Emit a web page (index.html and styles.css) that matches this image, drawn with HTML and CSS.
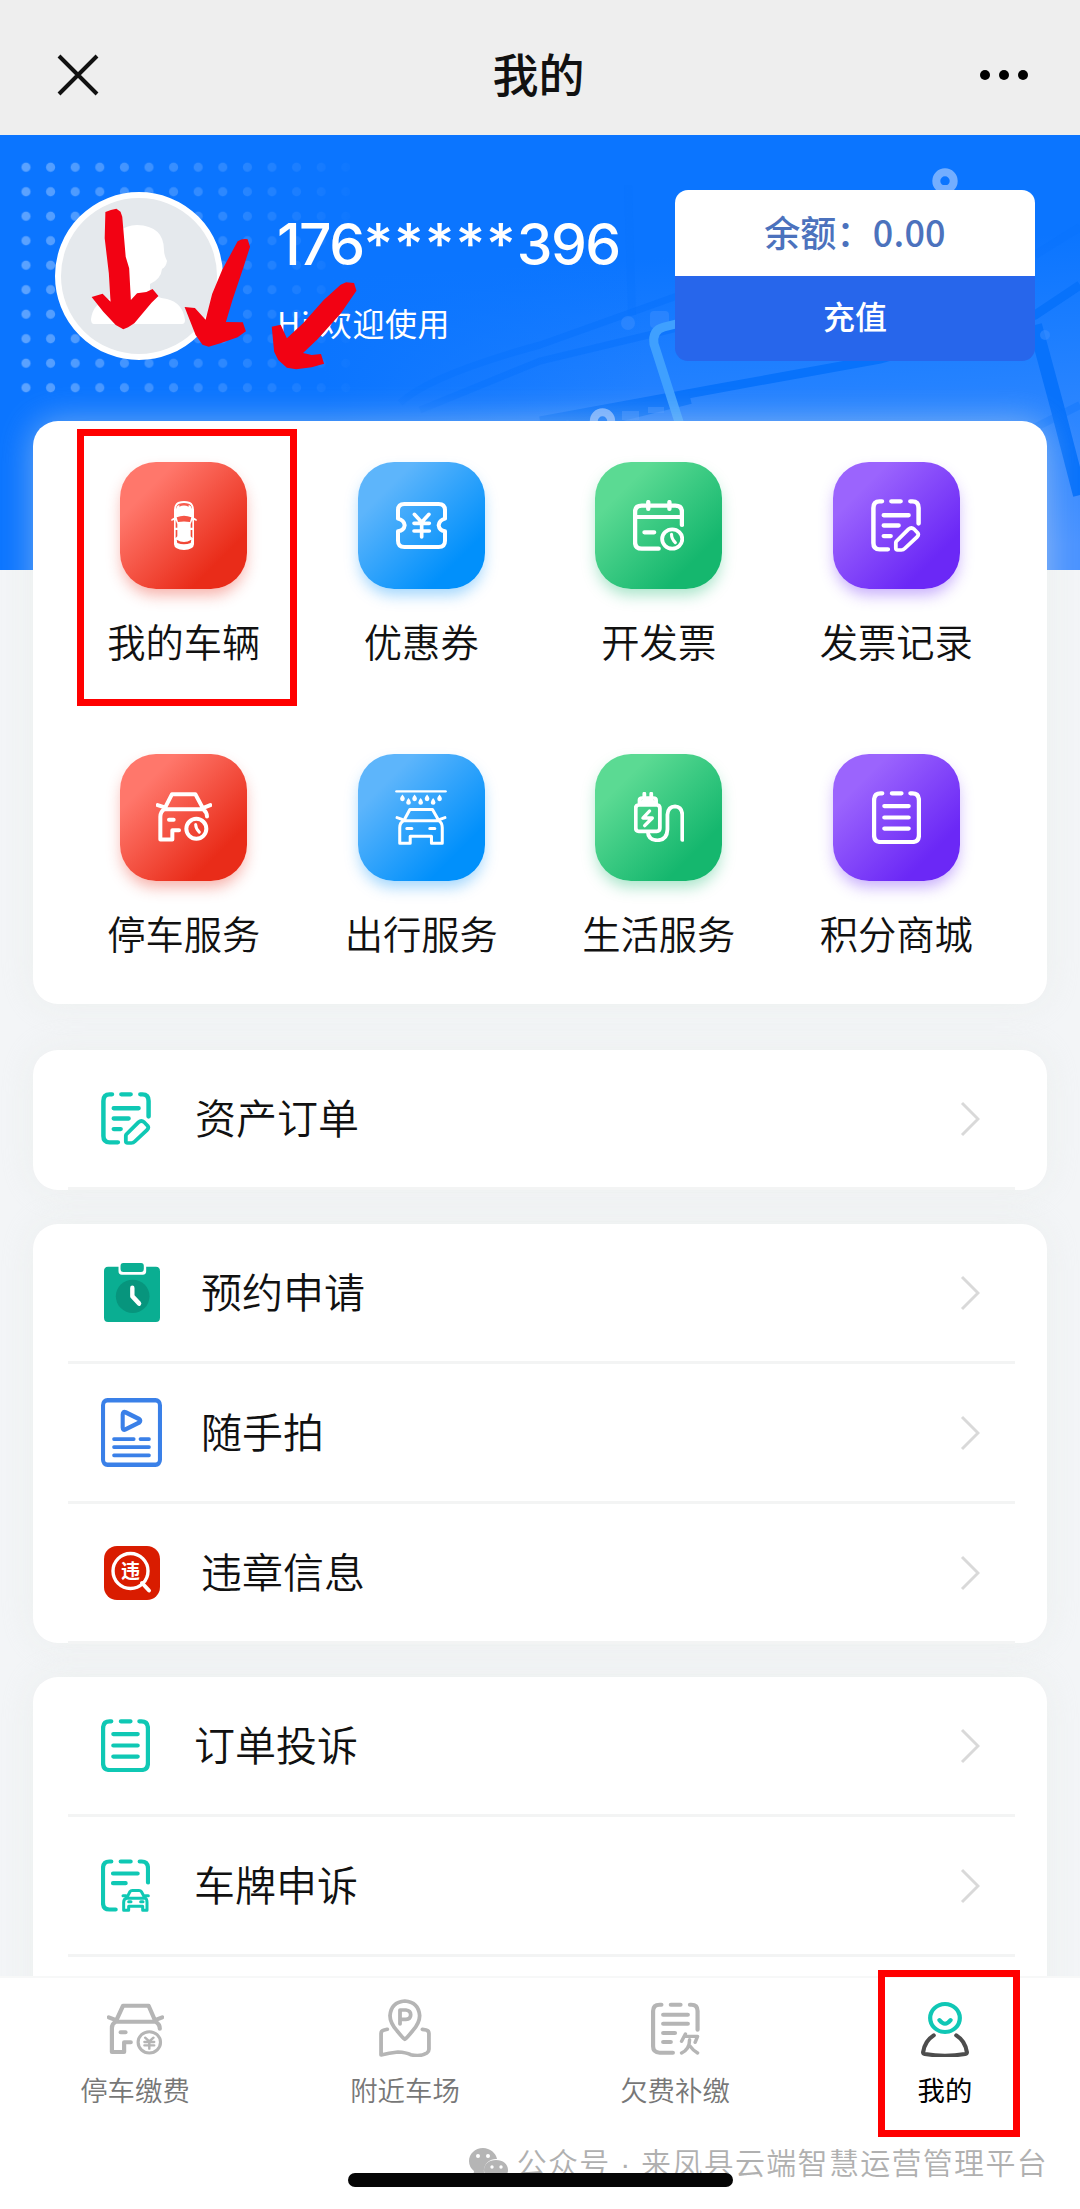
FILE: index.html
```html
<!DOCTYPE html>
<html lang="zh-CN">
<head>
<meta charset="utf-8">
<title>我的</title>
<link rel="stylesheet" href="styles.css">
</head>
<body>
<svg class="defs" aria-hidden="true">
  <symbol id="doc-pen" viewBox="0 0 145 160" preserveAspectRatio="none">
    <g fill="none" stroke="currentColor" stroke-width="13" stroke-linecap="round" stroke-linejoin="round">
      <path d="M32 7H25Q7 7 7 27V133Q7 152 25 152H49M59 7H86M114 7H120Q138 7 138 27V74M37 49H109M37 80H80M37 112H57"/>
      <path stroke-width="11" d="M73 128L109 91Q117 84 125 91L135 102Q140 108 133 115L97 150Q94 154 88 154H77Q72 154 72 148V132Z"/>
    </g>
  </symbol>
  <symbol id="doc-list" viewBox="0 0 143 158" preserveAspectRatio="none">
    <path fill="none" stroke="currentColor" stroke-width="12.5" stroke-linecap="round" d="M30 7H25Q6 7 6 28V131Q6 152 25 152H118Q137 152 137 131V28Q137 7 118 7H112M58 7H86M36 45H107M36 79H107M36 112H107"/>
  </symbol>
  <symbol id="chev" viewBox="0 0 20 36">
    <path fill="none" stroke="#d9d9d9" stroke-width="3" d="M2 2L18 18L2 34"/>
  </symbol>
</svg>

<div class="page">
  <header class="nav">
    <svg class="close" viewBox="0 0 44 44"><path d="M3 3L41 41M41 3L3 41" stroke="#111" stroke-width="4" fill="none"/></svg>
    <h1>我的</h1>
    <svg class="more" viewBox="0 0 50 12"><circle cx="6" cy="6" r="5"/><circle cx="25" cy="6" r="5"/><circle cx="44" cy="6" r="5"/></svg>
  </header>

  <main class="content">
    <section class="hero">
      <svg class="hero-bg" viewBox="0 0 1080 435">
        <defs>
          <linearGradient id="sky" x1=".45" y1="0" x2=".6" y2="1"><stop offset=".3" stop-color="#0b75ff"/><stop offset=".72" stop-color="#2c86ff"/><stop offset="1" stop-color="#4a93ff"/></linearGradient>
          <linearGradient id="left" x1="0" x2="1"><stop offset=".3" stop-color="#0b75ff"/><stop offset=".6" stop-color="#0b75ff" stop-opacity="0"/></linearGradient>
          <linearGradient id="fade" x1="0" x2="1"><stop offset="0" stop-color="#fff" stop-opacity=".34"/><stop offset="1" stop-color="#fff" stop-opacity="0"/></linearGradient>
          <pattern id="dots" x="13.7" y="20" width="24.6" height="24.5" patternUnits="userSpaceOnUse"><circle cx="12.3" cy="12.2" r="4.6" fill="#fff"/></pattern>
          <mask id="dotmask"><rect x="14" y="20" width="356" height="245" fill="url(#fade)"/></mask>
        </defs>
        <rect width="1080" height="435" fill="url(#sky)"/>
        <g fill="none" stroke="#0872fb">
          <path stroke-width="7" d="M400 268Q430 240 540 210L680 160M420 275L540 226L690 190" opacity=".6"/>
          <path stroke-width="9" d="M540 286L720 253L880 224L1035 180L1080 150"/>
          <path stroke-width="14" d="M570 292L690 262M1035 190L1058 275L1080 360"/>
          <path stroke-width="8" d="M628 50L632 180M1035 120L1080 92M1000 310L1080 270" opacity=".35"/>
        </g>
        <rect width="1080" height="435" fill="url(#left)"/>
        <g fill="#3d8fff" opacity=".5"><circle cx="628" cy="188" r="7"/><rect x="650" y="176" width="19" height="17" rx="4"/><circle cx="1045" cy="200" r="5"/><rect x="622" y="276" width="17" height="9"/><rect x="648" y="272" width="16" height="6"/></g>
        <rect x="14" y="20" width="356" height="245" fill="url(#dots)" mask="url(#dotmask)"/>
        <path d="M680 188L664 192Q652 195 654 209L680 290" fill="none" stroke="#3fa0ff" stroke-width="9"/>
        <g fill="none" stroke="#73aeff" stroke-width="8"><circle cx="945" cy="46" r="8.7"/><circle cx="602.5" cy="286" r="8.7"/></g>
        <path d="M935 50H955L951 60H939Z" fill="#73aeff"/>
      </svg>
      <div class="profile">
        <svg class="avatar" viewBox="0 0 168 168">
          <circle cx="84" cy="84" r="81" fill="#e5e9ed" stroke="#fff" stroke-width="6"/>
          <path fill="#fff" d="M57 66V55Q60 34 82 33Q109 34 109 58Q109 63 112 69Q111 75 107 77Q106 87 95 92V101Q100 105 112 107Q128 111 130 128Q130 132 127 132H39Q36 132 36 127Q38 111 54 107Q68 104 71 100V91Q61 87 58 77Z"/>
        </svg>
        <div class="who"><div class="phone">176<span class="stars">*****</span>396</div><div class="hi">Hi,欢迎使用</div></div>
        <div class="wallet"><div class="balance">余额：0.00</div><div class="charge">充值</div></div>
      </div>
    </section>

    <section class="card menu">
      <div class="item"><div class="tile red">
        <svg width="26" height="49" viewBox="0 0 76 147"><path fill="#fff" fill-rule="evenodd" d="M20 3Q38-3 56 3Q68 10 68 27V50L76 55V60L68 57V130Q67 146 38 147Q9 146 8 130V57L0 60V55L8 50V27Q8 10 20 3ZM14 24Q14 12 24 8Q38 4 52 8Q62 12 62 24Q60 14 52 11V17Q38 10 24 17V11Q16 14 14 24ZM16 49Q38 39 60 49L56 63Q38 60 20 63ZM13 57L18 69V80H13ZM63 57L58 69V80H63ZM13 87H18V106L13 111ZM63 87H58V106L63 111ZM16 116Q38 130 60 116L58 126Q38 134 18 126Z"/></svg>
      </div><span>我的车辆</span></div>
      <div class="item"><div class="tile blue">
        <svg width="51" height="47" viewBox="0 0 153 141"><g fill="none" stroke="#fff" stroke-width="12" stroke-linecap="round" stroke-linejoin="round"><path d="M6 50V25Q6 6 25 6H128Q147 6 147 25V50Q130 54 128 70Q130 86 147 88V116Q147 135 128 135H25Q6 135 6 116V88Q24 86 26 70Q24 54 6 50Z"/><path stroke-width="11" d="M55 37L77 61L99 37M77 61V105M54 64H100M54 87H100"/></g></svg>
      </div><span>优惠券</span></div>
      <div class="item"><div class="tile green">
        <svg width="51" height="51" viewBox="0 0 147 153" preserveAspectRatio="none"><g fill="none" stroke="#fff" stroke-width="12.5" stroke-linecap="round"><path d="M74 146H25Q6 146 6 127V36Q6 17 25 17H122Q141 17 141 36V75M44 6V27M105 6V27M6 51H141M33 97H61"/><circle cx="113" cy="117" r="29" stroke-width="11"/><path d="M111 103Q111 117 122 128" stroke-width="9"/></g></svg>
      </div><span>开发票</span></div>
      <div class="item"><div class="tile purple"><svg width="50" height="53"><use href="#doc-pen"/></svg></div><span>发票记录</span></div>
      <div class="item"><div class="tile red">
        <svg width="56" height="50" viewBox="0 0 168 149"><g fill="none" stroke="#fff" stroke-width="12" stroke-linecap="round" stroke-linejoin="round"><path d="M25 51L48 6H118L142 51H25Q13 59 13 74V142H49V114H69M5 39L24 45M163 39L142 47M142 51Q153 61 153 73M39 83H53"/><circle cx="121" cy="110" r="30"/><path d="M119 97Q119 109 130 120" stroke-width="9"/></g></svg>
      </div><span>停车服务</span></div>
      <div class="item"><div class="tile blue">
        <svg width="52" height="55" viewBox="0 0 154 163"><g fill="none" stroke="#fff" stroke-width="9" stroke-linecap="round" stroke-linejoin="round"><path stroke-width="7" d="M4 4H150"/><path d="M26 91L44 58H111L130 91H26Q14 97 14 112V158H45V137H108V158H140V112Q140 97 130 91M6 82L21 87M148 82L133 87M35 114H50M103 114H118"/></g><g fill="#fff"><path d="M22 13q7 8 7 13a7 7 0 0 1-14 0q0-5 7-13ZM58 13q7 8 7 13a7 7 0 0 1-14 0q0-5 7-13ZM95 13q7 8 7 13a7 7 0 0 1-14 0q0-5 7-13ZM132 13q7 8 7 13a7 7 0 0 1-14 0q0-5 7-13ZM40 24q7 8 7 13a7 7 0 0 1-14 0q0-5 7-13ZM76 24q7 8 7 13a7 7 0 0 1-14 0q0-5 7-13ZM113 24q7 8 7 13a7 7 0 0 1-14 0q0-5 7-13Z"/></g></svg>
      </div><span>出行服务</span></div>
      <div class="item"><div class="tile green">
        <svg width="50" height="50" viewBox="0 0 145 150" preserveAspectRatio="none"><g fill="none" stroke="#fff" stroke-width="11" stroke-linecap="round" stroke-linejoin="round"><path d="M14 39H66Q75 39 75 49V108Q75 118 66 118H14Q5 118 5 108V49Q5 39 14 39M16 36V24Q16 18 24 18H56Q64 18 64 24V36M30 5V16M50 5V16M40 119Q41 144 68 145Q96 144 97 112V68Q99 43 119 43Q139 44 140 68V144M26 29H54"/><path d="M45 57L26 78H53L31 101" stroke-width="10"/></g></svg>
      </div><span>生活服务</span></div>
      <div class="item"><div class="tile purple"><svg width="49" height="53"><use href="#doc-list"/></svg></div><span>积分商城</span></div>
    </section>

    <section class="card list">
      <div class="row"><svg class="ico teal" width="50" height="53"><use href="#doc-pen"/></svg><span>资产订单</span><svg class="chev"><use href="#chev"/></svg></div>
    </section>

    <section class="card list wide">
      <div class="row"><div class="ico"><svg width="56" height="59" viewBox="0 0 166 156" preserveAspectRatio="none"><path d="M12 10H154Q166 10 166 22V144Q166 156 154 156H12Q0 156 0 144V22Q0 10 12 10Z" fill="#0aae92"/><rect x="43" y="-6" width="82" height="37" rx="10" fill="#fff"/><rect x="49" y="0" width="69" height="24" rx="8" fill="#0aae92"/><ellipse cx="85" cy="88" rx="50" ry="44" fill="#07957d"/><path d="M84 66V88L104 107" fill="none" stroke="#fff" stroke-width="13" stroke-linecap="round" stroke-linejoin="round"/></svg></div><span>预约申请</span><svg class="chev"><use href="#chev"/></svg></div>
      <div class="row"><div class="ico"><svg width="61" height="69" viewBox="0 0 180 183" preserveAspectRatio="none"><g fill="none" stroke="#3a80e8" stroke-width="12" stroke-linecap="round" stroke-linejoin="round"><rect x="6" y="6" width="168" height="171" rx="13"/><path d="M64 44Q64 35 73 38L113 56Q119 60 113 65L73 83Q64 87 64 78Z"/><path stroke-width="10" d="M38 109H97M116 109H142M38 130H142M38 152H142"/></g></svg></div><span>随手拍</span><svg class="chev"><use href="#chev"/></svg></div>
      <div class="row"><div class="ico"><svg width="56" height="54" viewBox="0 0 56 54"><rect width="56" height="54" rx="13" fill="#d91c00"/><circle cx="26.5" cy="25" r="17.5" fill="none" stroke="#fff" stroke-width="3.4"/><path d="M38 37L45 44.5" stroke="#fff" stroke-width="4" stroke-linecap="round"/><text x="26.5" y="32" class="glyph">违</text></svg></div><span>违章信息</span><svg class="chev"><use href="#chev"/></svg></div>
    </section>

    <section class="card list">
      <div class="row"><svg class="ico teal" width="49" height="53"><use href="#doc-list"/></svg><span>订单投诉</span><svg class="chev"><use href="#chev"/></svg></div>
      <div class="row"><svg class="ico teal" width="49" height="53" viewBox="0 0 147 158"><g fill="none" stroke="currentColor" stroke-width="12.5" stroke-linecap="round" stroke-linejoin="round"><path d="M31 7H25Q6 7 6 28V131Q6 151 25 151H44M59 7H89M116 7H122Q141 7 141 28V70M36 43H110M36 72H74"/><path stroke-width="9" d="M77 117L87 97Q89 94 94 94H114Q119 94 121 97L132 117H77Q68 119 68 129V153H83V141H125V153H138V129Q138 119 132 117M66 110H75M142 110H133M83 128H90M119 128H126"/></g></svg><span>车牌申诉</span><svg class="chev"><use href="#chev"/></svg></div>
      <div class="row"></div>
    </section>
  </main>

  <footer class="tabs">
    <div class="tab"><svg width="57" height="59" viewBox="0 0 163 177" preserveAspectRatio="none"><g fill="none" stroke="#b5b5b5" stroke-width="12" stroke-linecap="round" stroke-linejoin="round"><path d="M25 71L46 23H119L139 71H25Q14 77 14 90V162H49V133H68M5 58L22 65M158 58L141 65M139 71Q151 78 151 92M39 103H53"/><circle cx="121" cy="133" r="32" stroke-width="9"/><path stroke-width="7" d="M109 119L121 130L133 119M121 130V152M107 132H135M107 142H135"/></g></svg><span>停车缴费</span></div>
    <div class="tab"><svg width="52" height="59" viewBox="0 0 151 177" preserveAspectRatio="none"><g fill="none" stroke="#b5b5b5" stroke-width="11" stroke-linecap="round" stroke-linejoin="round"><path d="M75 124Q69 120 52 98Q32 74 32 53Q35 12 75 9Q115 12 118 53Q118 74 98 98Q81 120 75 124ZM24 94L13 97Q6 99 6 107V171Q29 165 55 162Q79 163 92 170Q120 177 139 165Q145 161 145 154V107Q145 98 137 96L126 94M61 78V36H78Q92 38 92 50Q92 63 78 64H63"/></g></svg><span>附近车场</span></div>
    <div class="tab"><svg width="49" height="59" viewBox="0 0 141 177" preserveAspectRatio="none"><g fill="none" stroke="#b5b5b5" stroke-width="12" stroke-linecap="round" stroke-linejoin="round"><path d="M30 20H25Q6 20 6 39V145Q6 164 25 164H63M57 20H85M112 20H116Q134 20 134 39V95M35 50H106M35 77H106M35 105H69M35 132H57"/><path stroke-width="10" d="M99 108L88 130M98 115H134L127 133M111 125Q111 153 88 165M113 145Q121 157 134 165"/></g></svg><span>欠费补缴</span></div>
    <div class="tab on"><svg width="48" height="59" viewBox="0 0 136 177" preserveAspectRatio="none"><g fill="none" stroke-width="12" stroke-linecap="round" stroke-linejoin="round"><g stroke="#10c7b5"><circle cx="68" cy="60" r="42"/><path d="M52 66Q68 88 84 66"/></g><path stroke="#4d4d4d" d="M36 112Q10 129 6 163Q6 167 11 168Q68 178 125 168Q130 167 130 163Q126 129 100 112"/></g></svg><span>我的</span></div>
  </footer>
</div>

<div class="watermark">
  <svg width="41" height="34" viewBox="0 0 41 34"><path fill="#b5b5b5" d="M15 1C7 1 1 7 1 14Q1 20 6 24L5 30L11 26H16A12 12 0 0 1 29 12C28 6 22 1 15 1Z"/><path fill="#b5b5b5" d="M28 13C21 13 16 17 16 23S21 33 28 33L32 32L37 34L36 30C39 28 40 26 40 23C40 17 35 13 28 13Z"/><g fill="#fff"><circle cx="10" cy="9" r="2"/><circle cx="20" cy="9" r="2"/><circle cx="24" cy="20" r="1.7"/><circle cx="33" cy="20" r="1.7"/></g></svg>
  <span>公众号 · 来凤县云端智慧运营管理平台</span>
</div>
<div class="homebar"></div>
<div class="mark mark-car"></div>
<div class="mark mark-me"></div>
<svg class="arrows" viewBox="0 0 1568 900" preserveAspectRatio="none" fill="#f20213">
  <path d="M306 246L322 240L338 236L350 245L355 260L365 380L375 415L380 510L398 490L425 486L443 477L460 498L440 518L390 580L372 592L358 598L336 585L300 545L266 501L298 491L321 515L316 430L304 325Z"/>
  <path d="M690 334Q704 325 719 328L726 350L707 412L675 510L656 576L705 577L714 604L690 622L640 640L606 650L588 644L568 615L536 531L566 534L597 569L616 492L645 420Z"/>
  <path d="M989 464L1005 457L1028 459L1035 482L990 550L922 628L880 669L905 675L932 672L941 701L905 712L860 718L833 713L808 690L796 665L789 590L815 584L833 625L880 580L940 510Z"/>
</svg>
</body>
</html>
```
FILE: styles.css
```css
* { box-sizing: border-box; }
body {
  margin: 0;
  position: relative;
  width: 1080px;
  height: 2209px;
  overflow: hidden;
  background: #f3f5f7;
  color: #111;
  font-family: "Noto Sans CJK SC", sans-serif;
}
svg { display: block; flex: none; }
.defs { position: absolute; width: 0; height: 0; }
.page { display: flex; flex-direction: column; height: 2209px; }

.nav {
  flex: none;
  height: 135px;
  padding: 15px 51px 0 56px;
  display: grid;
  grid-template-columns: 1fr auto 1fr;
  align-items: center;
  background: #eeeeee;
}
.nav h1 { margin: 0; padding: 0 8px 7px 0; font-size: 46px; line-height: 60px; font-weight: 500; }
.close { width: 44px; height: 44px; }
.more { width: 50px; height: 12px; justify-self: end; }

.content { flex: 1; min-height: 0; overflow: hidden; }
.hero { position: relative; height: 435px; margin-bottom: -149px; background: #0b75ff; }
.hero-bg { position: absolute; inset: 0; width: 1080px; height: 435px; }
.profile { position: relative; display: flex; align-items: flex-start; padding: 55px 45px 0 55px; }
.avatar { width: 168px; height: 168px; margin-top: 2px; }
.who { flex: 1; padding: 20px 0 0 54px; color: #fff; white-space: nowrap; }
.phone { font: 500 57px/70px Inter, sans-serif; height: 70px; letter-spacing: -1.6px; }
.stars { letter-spacing: 1px; }
.hi { font-size: 32px; line-height: 46px; margin-top: 19px; letter-spacing: .6px; }
.wallet { width: 360px; border-radius: 13px; overflow: hidden; text-align: center; font-weight: 500; }
.balance { height: 86px; line-height: 82px; background: #fff; color: #4c72bd; font-size: 36px; letter-spacing: .2px; }
.charge { height: 85px; line-height: 78px; background: #2766eb; color: #fff; font-size: 32px; }

.card {
  position: relative;
  margin: 0 33px;
  background: #fff;
  border-radius: 25px;
  box-shadow: 0 0 34px rgba(228, 232, 228, .45);
}
.menu {
  display: grid;
  grid-template-columns: repeat(4, 1fr);
  grid-auto-rows: 291.5px;
  height: 583px;
  padding: 41px 32px 0;
}
.item { display: flex; flex-direction: column; align-items: center; font-size: 38.3px; font-weight: 350; line-height: 54px; }
.tile {
  width: 127px;
  height: 127px;
  margin-bottom: 25px;
  border-radius: 36px;
  display: flex;
  align-items: center;
  justify-content: center;
  color: #fff;
}
.red { background: linear-gradient(135deg, #ff776b 22%, #e92c19 78%); box-shadow: 0 8px 15px -2px rgba(233, 44, 25, .38); }
.blue { background: linear-gradient(135deg, #5db5fb 22%, #0190fb 78%); box-shadow: 0 8px 15px -2px rgba(1, 144, 251, .38); }
.green { background: linear-gradient(135deg, #5bda93 22%, #15b76e 78%); box-shadow: 0 8px 15px -2px rgba(21, 183, 110, .38); }
.purple { background: linear-gradient(135deg, #9b64fd 22%, #6b28f6 78%); box-shadow: 0 8px 15px -2px rgba(107, 40, 246, .38); }

.list { margin-top: 34px; }
.menu + .list { margin-top: 46px; }
.row {
  height: 140px;
  margin: 0 32px 0 35px;
  padding: 0 35px 0 33px;
  border-bottom: 3px solid #f3f4f4;
  display: flex;
  align-items: center;
  font-size: 41px;
  font-weight: 350;
}
.row span { flex: 1; margin-left: 44px; line-height: 60px; padding-bottom: 5px; }
.ico { flex: none; }
.teal { color: #0fc8b4; }
.wide .ico { width: 61px; display: flex; justify-content: center; }
.wide .row span { margin-left: 39px; }
.wide { height: 419px; }
.chev { width: 20px; height: 36px; }
.glyph { font: 700 19px "Noto Sans CJK SC", sans-serif; fill: #fff; text-anchor: middle; }

.tabs {
  position: relative;
  flex: none;
  height: 233px;
  display: grid;
  grid-template-columns: repeat(4, 1fr);
  background: #fff;
  border-top: 2px solid #f7f8f8;
  padding-top: 20px;
}
.tab { display: flex; flex-direction: column; align-items: center; font-size: 27.4px; font-weight: 350; line-height: 40px; color: #777; }
.tab span { margin-top: 12px; }
.tab.on { color: #000; font-weight: 400; }

.watermark { position: absolute; right: 32px; top: 2143px; display: flex; gap: 8px; align-items: center; font: 350 30px/42px "Liberation Sans", "Noto Sans CJK SC", sans-serif; letter-spacing: 1.3px; color: #b0b0b0; white-space: nowrap; }
.homebar { position: absolute; left: 348px; top: 2173px; width: 385px; height: 14px; border-radius: 7px; background: #050505; }
.mark { position: absolute; border: 7.5px solid #f00; }
.mark-car { left: 77px; top: 429px; width: 220px; height: 277px; }
.mark-me { left: 878px; top: 1970px; width: 142px; height: 167px; }
.arrows { position: absolute; left: 0; top: 130px; width: 540px; height: 300px; }
```
